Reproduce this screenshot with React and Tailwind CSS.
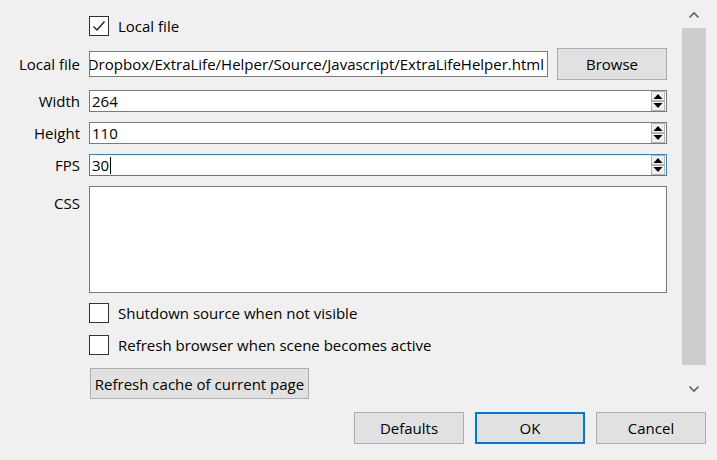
import React from 'react';

const font = { fontFamily: '"Open Sans", "Noto Sans", sans-serif' };

const Check = ({ checked }) => (
    <div className="w-[20px] h-[20px] border border-[#333333] bg-white flex items-center justify-center shrink-0">
        {checked && (
            <svg width="14" height="12" viewBox="0 0 14 12">
                <path d="M1.5 6.5 L5 10 L12.5 1.5" fill="none" stroke="#222" strokeWidth="1.4" />
            </svg>
        )}
    </div>
);

const Spin = () => (
    <svg width="14" height="20" viewBox="0 0 14 20" className="shrink-0">
        <rect x="0.5" y="0.5" width="13" height="9" fill="#f0f0f0" stroke="#b5b5b5" />
        <rect x="0.5" y="10.5" width="13" height="9" fill="#f0f0f0" stroke="#b5b5b5" />
        <path d="M2.5 8 L7 3 L11.5 8 Z" fill="#000" />
        <path d="M2.5 12 L7 17 L11.5 12 Z" fill="#000" />
    </svg>
);

const SpinRow = ({ label, value, focused }) => (
    <div className="flex items-center gap-[9px] mt-[10px] h-[22px]">
        <div className="w-[80px] text-right">{label}</div>
        <div className={`flex-1 h-[22px] bg-white border flex items-center justify-between pl-[2px] pr-[1px] ${focused ? 'border-[#3d7fb8]' : 'border-[#7a7a7a]'}`}>
            <div className="flex items-center">
                {value}
                {focused && <span className="inline-block w-px h-[17px] bg-black ml-px" />}
            </div>
            <Spin />
        </div>
    </div>
);

const Button = ({ children, className, primary }) => (
    <button
        className={`bg-[#e1e1e1] text-black flex items-center justify-center ${primary ? 'border-2 border-[#0078d7]' : 'border border-[#adadad]'} ${className}`}
    >
        {children}
    </button>
);

export default function App() {
    return (
        <div className="w-[717px] h-[460px] bg-[#f0f0f0] flex flex-col overflow-hidden text-[15px] leading-[20px] text-black" style={font}>
            <div className="flex h-[401px]">
                <div className="w-[667px] flex flex-col pt-[16px]">
                    <div className="flex items-center gap-[9px] h-[20px] pl-[89px]">
                        <Check checked />
                        <span>Local file</span>
                    </div>

                    <div className="flex items-center gap-[9px] mt-[12px] h-[32px]">
                        <div className="w-[80px] text-right">Local file</div>
                        <div className="w-[459px] h-[26px] bg-white border border-[#7a7a7a] overflow-hidden flex justify-end items-center pr-[3px] whitespace-nowrap">
                            C:/Users/Jarett/Dropbox/ExtraLife/Helper/Source/Javascript/ExtraLifeHelper.html
                        </div>
                        <Button className="ml-auto w-[110px] h-[32px]">Browse</Button>
                    </div>

                    <SpinRow label="Width" value="264" />
                    <SpinRow label="Height" value="110" />
                    <SpinRow label="FPS" value="30" focused />

                    <div className="flex items-start gap-[9px] mt-[10px]">
                        <div className="w-[80px] text-right pt-[7px]">CSS</div>
                        <div className="flex-1 h-[107px] bg-white border border-[#7a7a7a]" />
                    </div>

                    <div className="flex items-center gap-[9px] h-[20px] pl-[89px] mt-[10px]">
                        <Check />
                        <span>Shutdown source when not visible</span>
                    </div>
                    <div className="flex items-center gap-[9px] h-[20px] pl-[89px] mt-[12px]">
                        <Check />
                        <span>Refresh browser when scene becomes active</span>
                    </div>
                    <div className="pl-[90px] mt-[13px]">
                        <Button className="w-[219px] h-[31px]">Refresh cache of current page</Button>
                    </div>
                </div>

                <div className="ml-[15px] w-[24px] flex flex-col items-center">
                    <div className="h-[28px] flex items-center justify-center pt-[2px]">
                        <svg width="12" height="8" viewBox="0 0 12 8">
                            <path d="M1.5 6.5 L6 2 L10.5 6.5" fill="none" stroke="#606060" strokeWidth="1.6" />
                        </svg>
                    </div>
                    <div className="w-[24px] h-[337px] bg-[#cdcdcd]" />
                    <div className="flex-1 flex items-center justify-center pt-[12px]">
                        <svg width="12" height="8" viewBox="0 0 12 8">
                            <path d="M1.5 1.5 L6 6 L10.5 1.5" fill="none" stroke="#606060" strokeWidth="1.6" />
                        </svg>
                    </div>
                </div>
            </div>

            <div className="flex justify-end gap-[11px] pr-[11px] mt-[11px]">
                <Button className="w-[110px] h-[32px]">Defaults</Button>
                <Button primary className="w-[110px] h-[32px]">OK</Button>
                <Button className="w-[110px] h-[32px]">Cancel</Button>
            </div>
        </div>
    );
}
